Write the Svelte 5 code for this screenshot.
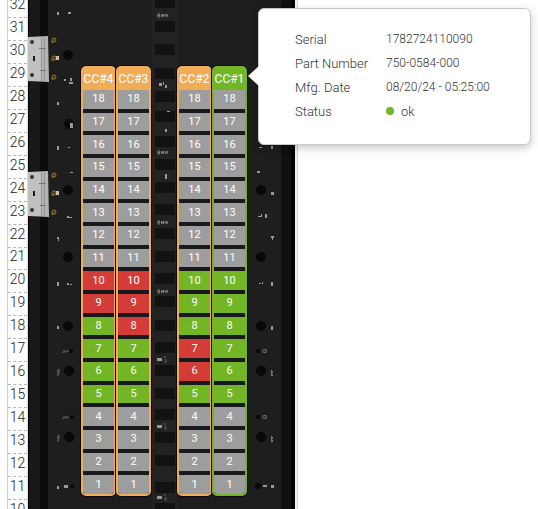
<script lang="ts">
  type Slot = 'idle' | 'ok' | 'fault';
  type Column = { name: string; state: 'warn' | 'good'; faults: number[]; oks: number[] };

  const units = Array.from({ length: 23 }, (_, i) => 32 - i);
  const slots = Array.from({ length: 18 }, (_, i) => 18 - i);

  const groups: Column[][] = [
    [
      { name: 'CC#4', state: 'warn', faults: [10, 9], oks: [8, 7, 6, 5] },
      { name: 'CC#3', state: 'warn', faults: [10, 9, 8], oks: [7, 6, 5] },
    ],
    [
      { name: 'CC#2', state: 'warn', faults: [7, 6], oks: [10, 9, 8, 5] },
      { name: 'CC#1', state: 'good', faults: [], oks: [10, 9, 8, 7, 6, 5] },
    ],
  ];

  let active = $state('CC#1');

  function slotState(col: Column, n: number): Slot {
    if (col.faults.includes(n)) return 'fault';
    return col.oks.includes(n) ? 'ok' : 'idle';
  }

  // Chassis artwork
  const vents = [-3, 21, 44, 68, 91, 111, 136, 159, 182, 204, 228, 251, 273, 296, 320, 342, 365, 388, 409, 432, 455, 482, 503];
  const holes = [
    [68, 55, 5], [69, 124, 5], [68, 190, 5], [68, 257, 5], [68, 326, 5], [69, 371, 5], [69, 437, 5],
    [71, 351, 2], [72, 417, 2], [72, 486, 2],
    [261, 190, 5], [261, 257, 5], [261, 326, 5], [261, 371, 5], [261, 437, 5],
    [258, 351, 2], [258, 417, 2], [258, 486, 3],
  ];
  const specks = [
    [57, 12, 2, 3], [68, 12, 3, 2], [57, 57, 2, 3], [64, 79, 2, 2], [70, 78, 2, 3], [69, 82, 4, 2], [57, 102, 2, 3],
    [70, 123, 3, 5], [57, 146, 2, 4], [68, 147, 2, 1], [70, 172, 3, 1], [67, 216, 2, 2], [69, 217, 3, 1],
    [57, 237, 2, 2], [58, 239, 1, 2], [57, 282, 2, 4], [67, 283, 2, 2], [70, 284, 2, 1], [57, 326, 2, 3],
    [259, 147, 3, 1], [271, 146, 2, 3], [257, 171, 3, 2], [271, 192, 3, 3], [258, 216, 3, 1], [261, 214, 1, 3],
    [265, 214, 2, 4], [271, 236, 3, 2], [272, 238, 1, 2], [259, 283, 2, 1], [262, 282, 1, 2], [271, 282, 2, 4],
    [271, 326, 2, 4], [57, 486, 2, 3], [64, 485, 4, 3], [263, 485, 4, 2], [271, 485, 3, 3],
    [159, 83, 3, 3], [163, 82, 1, 3], [165, 85, 2, 3], [167, 111, 3, 1], [165, 129, 2, 3], [165, 174, 2, 5],
  ];
  const labels = [14, 151, 221, 290];
  const plugs = [358, 425, 496];
  const pins = [351, 417];
  const marks = [371, 437];
</script>

<main class="viewer">
  <ol class="ruler">
    {#each units as unit}
      <li>{unit}</li>
    {/each}
  </ol>

  <section class="chassis" aria-label="Rack">
    <svg class="art" viewBox="28 0 270 509" width="270" height="509" aria-hidden="true">
      <rect x="28" y="0" width="267" height="509" fill="#1e1e1e" />
      <rect x="28" y="0" width="20" height="509" fill="#181818" />
      <rect x="40" y="0" width="8" height="509" fill="#0c0c0c" />
      <rect x="28" y="0" width="1" height="509" fill="#050505" />
      <rect x="152" y="0" width="25" height="509" fill="#222222" />
      <rect x="281" y="0" width="10" height="509" fill="#101010" />
      <rect x="291" y="0" width="4" height="509" fill="#030303" />
      {#each vents as y}
        <rect x="155" {y} width="20" height="11" fill="#121212" />
      {/each}
      {#each holes as [x, y, r]}
        <circle cx={x} cy={y} {r} fill="#080808" />
      {/each}
      {#each specks as [x, y, w, h]}
        <rect {x} {y} width={w} height={h} fill="#9c9892" />
      {/each}
      {#each labels as y}
        <path d="M160 {y}h-2v3h2m-2-1.500h2m1.500 1.500v-3l2 3v-3m1.500 0v2h2v-2v3" stroke="#85817c" fill="none" />
      {/each}
      {#each plugs as y}
        <rect x="157" y={y} width="5" height="3" fill="#9b968b" />
        <path d="M163.500 {y - 1}h2m-1 3h2m-2 2h2" stroke="#77736b" fill="none" />
      {/each}
      {#each pins as y}
        <path d="M63 {y}h3m1 0h2m-6 1v1m3-2v2" stroke="#77736e" fill="none" />
        <rect x="262.500" y={y - 1.5} width="4" height="3" rx="1" stroke="#77736e" fill="#33312f" />
      {/each}
      {#each marks as y}
        <path d="M57 {y - 1}h3m-3 2h3m-3 2h2m-1-4v6" stroke="#65625e" fill="none" />
        <path d="M271.500 {y - 1}v6m1-5v2m0 1v2" stroke="#77736e" fill="none" />
      {/each}
      {#each [36, 171] as y}
        <g transform="translate(28 {y})">
          <path d="M0 1L20 0 21 46 0 45Z" fill="#b3b3b1" />
          <path d="M0 1L13 1V45L0 45Z" fill="#c0c0be" />
          <path d="M13.500 2V45M16.500 2V45" stroke="#949492" fill="none" />
          <path d="M11 12.500h7M12 34.500h6" stroke="#777" fill="none" />
          <circle cx="4" cy="6" r="2" fill="#343434" />
          <circle cx="4" cy="39" r="2" fill="#343434" />
          <rect x="5" y="20" width="2" height="5" fill="#161616" />
          {#each [4, 22, 41] as py}
            <circle cx="26" cy={py} r="2" fill="#443611" stroke="#92752c" />
            <path d="M23 {py + 2}h3" stroke="#92752c" />
          {/each}
          <rect x="28" y="20" width="3" height="4" fill="#c8c2ac" />
        </g>
      {/each}
      <rect x="295" y="0" width="3" height="509" fill="#f4f2f2" />
      <rect x="297" y="0" width="1" height="509" fill="#d2d0d0" />
    </svg>

    <div class="groups">
      {#each groups as group}
        <div class="group">
          {#each group as col}
            <div class="column {col.state}">
              <button
                type="button"
                aria-describedby={active === col.name ? 'module-info' : undefined}
                onclick={() => (active = col.name)}>{col.name}</button
              >
              <ol class="slots">
                {#each slots as n}
                  <li class={slotState(col, n)}>{n}</li>
                {/each}
              </ol>

              {#if active === col.name}
                <div class="tooltip" id="module-info" role="tooltip">
                  <dl>
                    <dt>Serial</dt>
                    <dd>1782724110090</dd>
                    <dt>Part Number</dt>
                    <dd>750-0584-000</dd>
                    <dt>Mfg. Date</dt>
                    <dd>08/20/24 - 05:25:00</dd>
                    <dt>Status</dt>
                    <dd class="status"><span class="dot"></span>ok</dd>
                  </dl>
                </div>
              {/if}
            </div>
          {/each}
        </div>
      {/each}
    </div>
  </section>
</main>

<style>
  :global(body) {
    background: #fff;
  }

  .viewer {
    display: flex;
    align-items: flex-start;
    height: 100vh;
    padding-left: 7px;
    box-sizing: border-box;
    overflow: hidden;
    font-family: Roboto, 'Liberation Sans', sans-serif;
  }

  ol, dl, dd {
    margin: 0;
    padding: 0;
    list-style: none;
  }

  .ruler {
    display: grid;
    grid-template-rows: repeat(23, 1fr);
    flex: none;
    width: 19px;
    height: 528px;
    margin-top: -5px;
    border-left: 1px solid #cfcfcf;
    border-right: 1px solid #dedede;
  }
  .ruler li {
    display: flex;
    align-items: center;
    justify-content: center;
    padding-bottom: 4px;
    border-bottom: 1px dashed #b8b8b8;
    font-size: 14px;
    font-weight: 300;
    line-height: 16px;
    color: #222;
  }

  .chassis {
    position: relative;
    flex: none;
    width: 270px;
  }
  .art {
    position: absolute;
    top: 0;
    left: 0;
  }

  .groups {
    position: relative;
    display: flex;
    gap: 26px;
    padding: 66px 0 0 53px;
  }
  .group {
    display: flex;
  }

  .column {
    --edge: #f0ad55;
    position: relative;
    box-sizing: border-box;
    width: 35px;
    border: 2px solid var(--edge);
    border-radius: 5px;
    background: #19191d;
    box-shadow: 0 0 0 1px #0b0b14;
  }
  .column.good {
    --edge: #72b626;
  }
  .column button {
    display: block;
    width: 100%;
    height: 22px;
    padding: 0;
    border: none;
    background: var(--edge);
    color: #fff;
    font-family: inherit;
    font-size: 12px;
    font-weight: 400;
    line-height: 16px;
    cursor: pointer;
  }

  .slots {
    display: grid;
    grid-template-rows: repeat(18, 1fr);
    gap: 4px;
    height: 404px;
  }
  .slots li {
    display: flex;
    align-items: center;
    justify-content: center;
    min-height: 0;
    font-size: 11px;
    font-weight: 400;
    line-height: 16px;
    color: #fff;
  }
  .slots li:last-child {
    border-radius: 0 0 3px 3px;
  }
  .slots .idle { background: #9d9d9d; }
  .slots .ok { background: #72b626; }
  .slots .fault { background: #d43d37; }

  .tooltip {
    position: absolute;
    z-index: 2;
    top: -60px;
    left: calc(100% + 13px);
    box-sizing: border-box;
    width: 273px;
    padding: 18px 36px 21px;
    border: 1px solid #c9c9c9;
    border-radius: 6px;
    background: #fff;
    box-shadow: 0 3px 8px rgba(0, 0, 0, 0.22);
  }
  .tooltip::before {
    content: '';
    position: absolute;
    top: 57px;
    left: -11px;
    border: solid transparent;
    border-width: 10px 11px 10px 0;
    border-right-color: #fff;
  }
  .tooltip dl {
    display: grid;
    grid-template-columns: 91px 1fr;
    grid-auto-rows: 24px;
    align-items: center;
    font-weight: 300;
    color: #333;
    white-space: nowrap;
  }
  .tooltip dt {
    font-size: 13px;
  }
  .tooltip dd {
    font-size: 12px;
  }
  .status {
    display: flex;
    align-items: center;
    gap: 7px;
  }
  .tooltip .status {
    font-size: 13px;
  }
  .dot {
    width: 8px;
    height: 8px;
    border-radius: 50%;
    background: #72b626;
  }
</style>
